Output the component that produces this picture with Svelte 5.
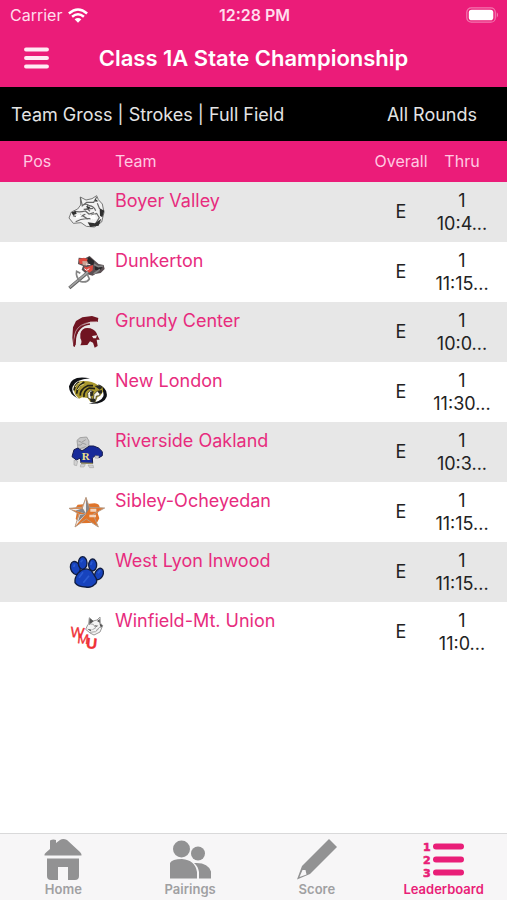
<script>
  const teams = [
    { name: 'Boyer Valley', logo: 'bulldog', time: '10:4...' },
    { name: 'Dunkerton', logo: 'raider', time: '11:15...' },
    { name: 'Grundy Center', logo: 'spartan', time: '10:0...' },
    { name: 'New London', logo: 'tiger', time: '11:30...' },
    { name: 'Riverside Oakland', logo: 'mascot', time: '10:3...' },
    { name: 'Sibley-Ocheyedan', logo: 'star', time: '11:15...' },
    { name: 'West Lyon Inwood', logo: 'paw', time: '11:15...' },
    { name: 'Winfield-Mt. Union', logo: 'wolf', time: '11:0...' }
  ];
</script>

<div class="app">
  <header>
    <div class="status">
      <span class="carrier">
        Carrier
        <svg width="20" height="15" viewBox="0 0 20 15" aria-hidden="true">
          <g fill="none" stroke="#fff" stroke-width="2.5">
            <path d="M.9 5.5Q10-2.6 19.1 5.5" />
            <path d="M4.1 8.8Q10 3.8 15.9 8.8" />
          </g>
          <path d="M6.6 11.3Q10 8.6 13.4 11.3L10 14.8Z" fill="#fff" />
        </svg>
      </span>
      <span class="clock">12:28 PM</span>
      <span class="battery">
        <svg width="33" height="16" viewBox="0 0 33 16" aria-hidden="true">
          <rect x=".8" y=".8" width="28.5" height="14.4" rx="4.5" fill="none" stroke="#fff" stroke-opacity=".4" stroke-width="1.2" />
          <rect x="2.8" y="2.8" width="24.5" height="10.4" rx="2.8" fill="#fff" />
          <path d="M30.8 5.3Q33 8 30.8 10.7Z" fill="#fff" fill-opacity=".5" />
        </svg>
      </span>
    </div>
    <div class="titlebar">
      <button class="menu" aria-label="Menu">
        <svg width="25" height="22" viewBox="0 0 25 22" aria-hidden="true">
          <path d="M2 2.5H23M2 11H23M2 19.5H23" stroke="#ffeaf4" stroke-width="3.9" stroke-linecap="round" />
        </svg>
      </button>
      <h1>Class 1A State Championship</h1>
    </div>
  </header>

  <div class="filters">
    <button>Team Gross | Strokes | Full Field</button>
    <button>All Rounds</button>
  </div>

  <main>
    <table>
      <thead>
        <tr>
          <th class="pos">Pos</th>
          <th class="mark" aria-label="Logo"></th>
          <th class="team">Team</th>
          <th class="overall">Overall</th>
          <th class="thru">Thru</th>
        </tr>
      </thead>
      <tbody>
        {#each teams as team}
          <tr>
            <td></td>
            <td class="mark">
              <svg class="logo" viewBox="21 27 120 120" aria-hidden="true">
                {#if team.logo === 'bulldog'}
                  <path d="M61 42L78 51L96 47L110 38L115 50L127 63L132 88L125 117L103 132L79 130L63 119L40 121L27 105L34 87L53 78L62 66Z" fill="#f2f2f2" stroke="#777" stroke-width="3" />
                  <path d="M61 43L67 68L80 58L101 58L110 42M65 70Q76 58 88 68Q102 70 107 83M42 84Q57 89 76 84L87 93L102 89M39 98Q58 105 76 94M47 116Q67 105 84 108M84 65Q77 76 90 85M93 97L110 91L118 104L107 122M71 79L99 76M61 94L80 106L99 107M112 61L119 78" fill="none" stroke="#666" stroke-width="3.5" />
                  <path d="M34 88L47 84L50 92L39 97ZM105 47L115 55L106 56ZM119 76L133 83L127 103L120 98ZM83 118L105 121L124 107L116 128L91 132ZM78 69L91 72L86 79Z" fill="#303030" />
                  <path d="M48 98L69 92L61 103L47 107ZM88 99L104 94L108 107L93 111Z" fill="#fff" />
                {:else if team.logo === 'raider'}
                  <path d="M56 44L75 46L89 39L103 52L116 63L131 66L134 78L122 90L106 93L98 98L79 93L65 80L69 69L54 63Z" fill="#5b5053" />
                  <path d="M56 48L72 44L87 50L77 62L59 63ZM73 70L80 73L99 66L98 82L88 89L74 82Z" fill="#df493f" />
                  <path d="M67 54L84 55L81 68L68 66Z" fill="#cba496" />
                  <path d="M86 41L103 54L100 66L90 65L81 54ZM104 70L127 73L119 84L105 80Z" fill="#29272a" />
                  <path d="M28 135L84 88" stroke="#606060" stroke-width="10" />
                  <path d="M29 133L84 87" stroke="#a2a2a2" stroke-width="5" />
                  <path d="M50 83Q46 102 61 115Q80 121 88 108L81 92M48 84L61 91M102 64L115 71L129 69M101 93L120 79" fill="none" stroke="#858585" stroke-width="5" />
                  <path d="M73 77L80 82L88 77M78 63L91 65" stroke="#f7eeee" stroke-width="3" fill="none" />
                {:else if team.logo === 'spartan'}
                  <path d="M40 130L37 104L39 73L48 54L67 43L96 39L115 45L113 57L91 56L70 65L57 80L49 99L47 126Z" fill="#701421" />
                  <path d="M43 127Q39 91 54 75Q70 57 111 56" fill="none" stroke="#d8c3c6" stroke-width="2" />
                  <path d="M43 131Q44 92 61 76Q71 65 90 63" fill="none" stroke="#701421" stroke-width="4" />
                  <path d="M61 92Q66 71 91 76Q109 82 112 97L119 110L110 110L113 129L104 134L99 119L90 115L82 126L61 127Q68 116 61 106Z" fill="#701421" />
                  <path d="M96 99L111 97L108 106L100 106Z" fill="#ececec" />
                {:else if team.logo === 'tiger'}
                  <path d="M90 46Q34 35 27 70Q26 94 56 108Q32 90 38 71Q45 50 90 46ZM114 63Q145 76 140 101Q132 125 86 122Q124 117 130 100Q134 84 114 63Z" fill="#0f1115" />
                  <path d="M40 78Q43 55 68 54Q96 53 113 66L128 73L129 86L121 98L113 102L106 118L91 116L83 105L66 103L57 107L46 95Z" fill="#aa982d" />
                  <path d="M42 82Q45 65 57 57M50 92Q51 70 73 57M61 98Q59 79 83 68L99 68M72 102Q69 84 88 75L105 77" fill="none" stroke="#202017" stroke-width="5" />
                  <path d="M84 105L83 91L93 80L97 85L91 95L96 110ZM100 110L102 94L112 84L123 84L118 98L109 99L106 115Z" fill="#f7f6ea" stroke="#24231e" stroke-width="2" />
                  <path d="M104 69L118 67L127 74L119 80ZM90 86L101 84L98 99L92 99ZM112 85L126 81L126 91L118 92ZM90 107L106 107L104 119L92 117Z" fill="#292923" />
                  <path d="M45 72L53 62L65 58M52 81L61 68L71 64" fill="none" stroke="#ded583" stroke-width="3" />
                {:else if team.logo === 'mascot'}
                  <path d="M51 52L60 44L80 42L87 54L86 77L73 87L54 80Z" fill="#c7c7c7" stroke="#888" stroke-width="2" />
                  <path d="M55 54L65 58L77 50M54 66L63 66L68 60L79 65M60 77L77 71" fill="none" stroke="#888" stroke-width="2" />
                  <path d="M42 80L54 75L66 84L88 69L101 69L116 75L127 86L127 98L117 104L108 96L97 105L98 121L63 120L61 105L49 111L36 101Z" fill="#172a9a" stroke="#151b4d" stroke-width="3" />
                  <text x="77" y="111" text-anchor="middle" font-size="33" font-weight="700" font-family="Liberation Serif, serif" fill="#eee188">R</text>
                  <path d="M63 120L98 121" stroke="#b5a957" stroke-width="3" />
                  <path d="M42 112L53 114L50 128L42 126ZM62 125L76 124L72 132L61 132ZM84 126L99 126L101 134L89 134ZM106 98L117 99L115 106L105 105Z" fill="#d1d1d1" stroke="#999" stroke-width="1.5" />
                {:else if team.logo === 'star'}
                  <path d="M53 65L104 61Q121 62 119 79L113 91L118 106L111 119L62 121L47 108L50 91L45 77Z" fill="#df742a" />
                  <path d="M78 43L88 73L134 75L99 94L115 132L79 108L45 132L57 93L27 76L67 73Z" fill="#df742a" stroke="#b59b86" stroke-width="3" />
                  <path d="M78 48L78 91L68 76ZM31 78L68 77L78 92ZM47 128L59 94L78 92Z" fill="#efeff0" />
                  <path d="M78 49L88 77L78 92ZM68 76L78 92L46 83ZM60 95L78 92L54 116Z" fill="#858589" />
                  <path d="M91 77H109V86H91ZM88 95H108V103H88Z" fill="#f4d4bc" />
                {:else if team.logo === 'paw'}
                  <g fill="#1743bd" stroke="#101d42" stroke-width="4">
                    <ellipse cx="46" cy="75" rx="14" ry="20" transform="rotate(-18 46 75)" />
                    <ellipse cx="68" cy="60" rx="13" ry="19" />
                    <ellipse cx="98" cy="66" rx="12" ry="18" />
                    <ellipse cx="117" cy="93" rx="12" ry="18" transform="rotate(25 117 93)" />
                    <path d="M55 89Q73 70 94 83L108 105Q114 119 103 125Q95 135 77 132Q53 132 45 119Q43 105 55 89Z" />
                  </g>
                  <path d="M62 58L68 50M41 72L44 64M92 66L96 56M114 91L121 82M57 104L69 88M70 119L87 98" stroke="#2b5bd2" stroke-width="5" />
                {:else}
                  <path d="M86 63L88 44L99 54L111 51L120 42L121 60L128 68L120 87L102 96L90 90L77 79L83 66Z" fill="#f4f4f4" stroke="#999" stroke-width="3" />
                  <path d="M89 46L101 55L87 66ZM111 54L119 48L120 60ZM82 77L95 80L91 85ZM103 67L115 68L108 72ZM118 60L128 68L122 75Z" fill="#555" />
                  <path d="M86 62L100 64L107 75L97 80M90 88L107 86L117 76M108 83L123 69" fill="none" stroke="#999" stroke-width="2.5" />
                  <g fill="#ef3036" stroke="#ef3036" stroke-width="1" font-family="Liberation Sans, sans-serif">
                    <text x="30" y="101" font-size="44" transform="rotate(6 30 101)">W</text>
                    <text x="51" y="120" font-size="41" transform="rotate(6 51 120)">M</text>
                    <text x="77" y="135" font-size="45" font-weight="700" transform="rotate(6 77 135)">U</text>
                  </g>
                {/if}
              </svg>
            </td>
            <td class="team"><a href="#team">{team.name}</a></td>
            <td class="overall">E</td>
            <td class="thru">1<br />{team.time}</td>
          </tr>
        {/each}
      </tbody>
    </table>
  </main>

  <nav>
    <a href="#home">
      <svg width="40" height="42" viewBox="0 0 40 42" aria-hidden="true">
        <path d="M1.5 17.5Q1 16 3 14.5L7 11V2.5Q10 1 13 2V5L17 2Q20 0 24 2L37 14Q39 16 38.5 17.5ZM4 20.5H36V38Q36 42 32 42H25V29H15V42H8Q4 42 4 38Z" />
      </svg>
      <span>Home</span>
    </a>
    <a href="#pairings">
      <svg width="42" height="42" viewBox="0 0 42 42" aria-hidden="true">
        <circle cx="12.5" cy="11" r="8.5" />
        <circle cx="29" cy="15.5" r="7" />
        <path d="M1 40.5V25Q3 21 13 21Q26 22 28 34V40.5ZM25 25Q39 24 42 33.5V40.5H30V34Q29 28 25 25Z" />
      </svg>
      <span>Pairings</span>
    </a>
    <a href="#score">
      <svg width="42" height="42" viewBox="0 0 42 42" aria-hidden="true">
        <path fill-rule="evenodd" d="M33 1L41 9L14 36L1 41.5L6 28ZM6.5 32L3.5 39L10.5 36.5L9.5 32Z" />
      </svg>
      <span>Score</span>
    </a>
    <a href="#leaderboard" class="active" aria-current="page">
      <svg width="42" height="42" viewBox="0 0 42 42" aria-hidden="true">
        <g font-family="DejaVu Sans, sans-serif" font-weight="700" font-size="11" stroke="currentColor" stroke-width=".6">
          <text x="0" y="13">1</text>
          <text x="0" y="26">2</text>
          <text x="0" y="39">3</text>
        </g>
        <path d="M13 8.5H38M13 21.5H38M13 34.5H38" stroke="currentColor" stroke-width="6" stroke-linecap="round" />
      </svg>
      <span>Leaderboard</span>
    </a>
  </nav>
</div>

<style>
  :global(body) {
    margin: 0;
    background: #fff;
  }

  .app {
    display: flex;
    flex-direction: column;
    min-height: 100vh;
    font-family: Inter, "Liberation Sans", sans-serif;
    color: #222;
  }

  button {
    padding: 0;
    border: 0;
    background: none;
    color: inherit;
    font: inherit;
  }

  a {
    color: #e72c7e;
    text-decoration: none;
  }

  svg {
    display: block;
  }

  header {
    height: 87px;
    background: #eb1c79;
    color: #fff;
  }

  .status {
    display: grid;
    grid-template-columns: 1fr auto 1fr;
    align-items: center;
    height: 30px;
    padding: 0 8px 0 10px;
    font-size: 16px;
    color: #ffddec;
  }

  .carrier {
    display: flex;
    align-items: center;
    gap: 6px;
  }

  .clock {
    font-weight: 600;
  }

  .battery {
    justify-self: end;
  }

  .titlebar {
    display: grid;
    grid-template-columns: 1fr auto 1fr;
    align-items: center;
    height: 56px;
    padding: 0 24px;
  }

  h1 {
    margin: 0;
    font-size: 22px;
    font-weight: 600;
    line-height: 28px;
    white-space: nowrap;
  }

  .filters {
    display: flex;
    justify-content: space-between;
    height: 54px;
    padding: 0 30px 0 11px;
    background: #000;
    color: #e4e4e4;
    font-size: 18px;
  }

  main {
    flex: 1;
  }

  table {
    width: 100%;
    border-collapse: collapse;
    table-layout: fixed;
  }

  th {
    height: 39px;
    padding: 0 0 2px;
    background: #eb1c79;
    color: #ffc9e1;
    font-size: 16px;
    font-weight: 400;
    line-height: 20px;
    text-align: left;
  }

  td {
    height: 60px;
    padding: 0;
    font-size: 18px;
    line-height: 23px;
  }

  tbody tr:nth-child(odd) {
    background: #e7e7e7;
  }

  .pos {
    width: 44px;
    padding-left: 23px;
  }

  .mark {
    width: 48px;
  }

  .logo {
    width: 40px;
    height: 40px;
  }

  td.team {
    vertical-align: top;
    padding-top: 7px;
    height: 53px;
  }

  .overall {
    width: 54px;
    text-align: center;
  }

  td.overall {
    height: 58px;
    padding-bottom: 2px;
  }

  .thru {
    width: 60px;
    padding-right: 15px;
    padding-left: 4px;
    text-align: center;
  }

  nav {
    display: grid;
    grid-template-columns: repeat(4, 1fr);
    height: 66px;
    border-top: 1px solid #d9d9da;
    background: #f7f6f7;
  }

  nav a {
    display: flex;
    flex-direction: column;
    align-items: center;
    padding-top: 4px;
    color: #a0a0a2;
    font-size: 13px;
    font-weight: 600;
    line-height: 18px;
  }

  nav svg {
    fill: #929293;
  }

  nav a.active {
    color: #e91e78;
  }

  nav .active svg {
    fill: currentColor;
  }
</style>
